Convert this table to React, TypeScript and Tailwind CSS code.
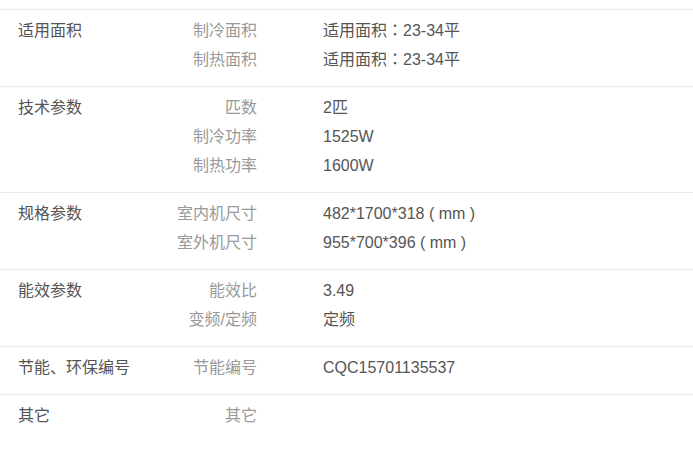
import React from "react";

const colon = (
  <span className="leading-none" style={{ fontFamily: '"Noto Sans CJK TC", sans-serif' }}>
    ：
  </span>
);

const sections: { title: string; rows: [string, React.ReactNode][] }[] = [
  {
    title: "适用面积",
    rows: [
      ["制冷面积", <>适用面积{colon}23-34平</>],
      ["制热面积", <>适用面积{colon}23-34平</>],
    ],
  },
  {
    title: "技术参数",
    rows: [
      ["匹数", "2匹"],
      ["制冷功率", "1525W"],
      ["制热功率", "1600W"],
    ],
  },
  {
    title: "规格参数",
    rows: [
      ["室内机尺寸", "482*1700*318 ( mm )"],
      ["室外机尺寸", "955*700*396 ( mm )"],
    ],
  },
  {
    title: "能效参数",
    rows: [
      ["能效比", "3.49"],
      ["变频/定频", "定频"],
    ],
  },
  {
    title: "节能、环保编号",
    rows: [["节能编号", "CQC15701135537"]],
  },
  {
    title: "其它",
    rows: [["其它", ""]],
  },
];

export default function App() {
  return (
    <div
      className="w-[693px] h-[451px] overflow-hidden bg-white pt-[9px] text-[16px] leading-[29px]"
      style={{ fontFamily: '"Liberation Sans", "Noto Sans CJK SC", sans-serif' }}
    >
      {sections.map((s) => (
        <div key={s.title} className="flex border-t border-[#ececec] pt-[6px] pb-[12px]">
          <div className="ml-[18px] w-[150px] shrink-0 text-[#555]">{s.title}</div>
          <div className="flex flex-col">
            {s.rows.map(([label, value]) => (
              <div key={label} className="flex h-[29px] overflow-hidden">
                <div className="w-[89px] shrink-0 text-right text-[#999]">{label}</div>
                <div className="ml-[66px] text-[#555] whitespace-pre">{value}</div>
              </div>
            ))}
          </div>
        </div>
      ))}
    </div>
  );
}
